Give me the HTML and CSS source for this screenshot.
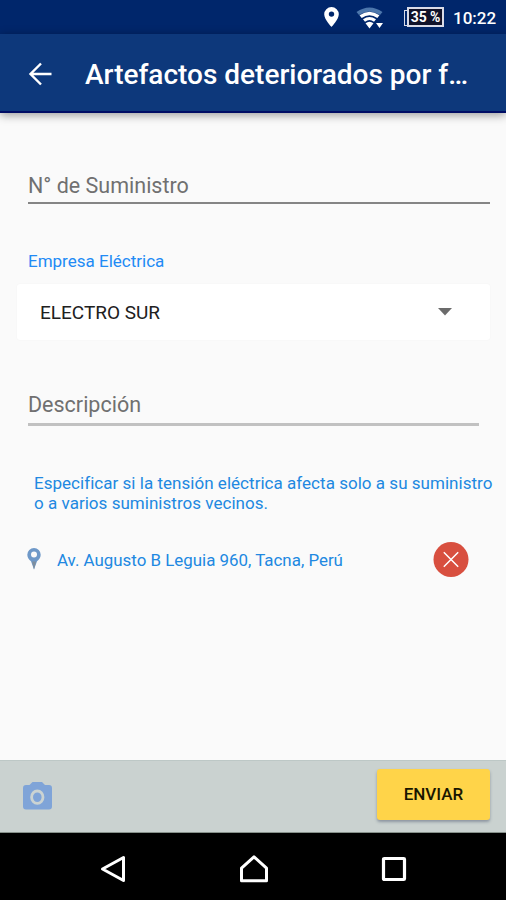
FILE: index.html
```html
<!DOCTYPE html>
<html lang="es">
<head>
<meta charset="utf-8">
<title>Artefactos deteriorados</title>
<link rel="stylesheet" href="styles.css">
</head>
<body>
<div class="screen">
  <div class="status">
    <svg class="status-pin" width="15" height="20" viewBox="0 0 15 20"><path fill="#fff" fill-rule="evenodd" d="M7.500 0A7.300 7.300 0 0 0 .2 7.300C.2 12.600 7.500 20 7.500 20s7.300-7.400 7.300-12.700A7.300 7.300 0 0 0 7.500 0zm0 4.400a2.700 2.700 0 1 1 0 5.400 2.700 2.700 0 0 1 0-5.400z"/></svg>
    <svg class="status-wifi" width="28" height="22" viewBox="0 0 28 22"><path fill="#4d77ac" d="M.5 5Q13.500-4 26.500 5L24 8Q13.500 1 3 8z"/><path fill="#fff" d="M3.500 8.300Q13.500 1.300 23.500 8.300L21.300 11Q13.500 5.500 5.700 11zM7 12.300Q13.500 7.500 20 12.300L18 14.700Q13.500 11.500 9 14.700zM9.500 16.300Q13.500 13.200 17.500 16.300L13.500 21.500zM20 16h7L23.500 21z"/></svg>
    <div class="battery"><span>35 %</span></div>
    <span class="clock">10:22</span>
  </div>
  <header class="appbar">
    <svg class="back" width="24" height="24" viewBox="0 0 24 24"><path fill="none" stroke="#fff" stroke-width="2.400" d="M23.500 12H2.500M13 1.500L2.500 12 13 22.500"/></svg>
    <h1>Artefactos deteriorados por f…</h1>
  </header>
  <main class="form">
    <div class="field supply"><span>N° de Suministro</span></div>
    <div class="label"><span>Empresa Eléctrica</span></div>
    <div class="select"><span>ELECTRO SUR</span><svg width="14" height="8" viewBox="0 0 14 8"><path fill="#6b6b6b" d="M0 0h14L7 7.500z"/></svg></div>
    <div class="field description"><span>Descripción</span></div>
    <p class="hint"><span>Especificar si la tensión eléctrica afecta solo a su suministro</span><br><span>o a varios suministros vecinos.</span></p>
    <div class="address">
      <svg class="address-pin" width="14" height="22" viewBox="0 0 14 22"><path fill="#6e98c8" fill-rule="evenodd" d="M7 0A6.700 6.700 0 0 0 .300 6.700C.300 9.500 2 11.500 4 13.300L7 21.500l3-8.200c2-1.800 3.700-3.800 3.700-6.600A6.700 6.700 0 0 0 7 0zm0 3.500a3 3 0 1 1 0 6 3 3 0 0 1 0-6z"/><path fill="#7f8e9d" d="M5 13.500h4L7 21.500z"/></svg>
      <span class="address-text">Av. Augusto B Leguia 960, Tacna, Perú</span>
      <svg class="remove" width="36" height="36" viewBox="0 0 36 36"><circle cx="18" cy="18.500" r="17.500" fill="#d84f3f"/><path fill="none" stroke="#fff" stroke-width="1.500" d="M10.800 11.300l14.400 14.400M25.200 11.300L10.800 25.700"/></svg>
    </div>
  </main>
  <footer class="actions">
    <svg class="camera" width="29" height="28" viewBox="0 0 29 28"><path fill="#7fa4d8" d="M3 3h3.500l3-3h9.500l3 3h4a3 3 0 0 1 3 3v18.500a3 3 0 0 1-3 3H3a3 3 0 0 1-3-3V6a3 3 0 0 1 3-3z"/><ellipse cx="14.300" cy="15.200" rx="5.700" ry="6.200" fill="none" stroke="#cbd3d2" stroke-width="2.800"/></svg>
    <button class="send"><span>ENVIAR</span></button>
  </footer>
  <nav class="system">
    <svg width="26" height="28" viewBox="0 0 26 28"><path fill="none" stroke="#fff" stroke-width="3" stroke-linejoin="round" d="M2.500 14L23.500 2.500v23z"/></svg>
    <svg width="30" height="28" viewBox="0 0 30 28"><path fill="none" stroke="#fff" stroke-width="3" stroke-linejoin="round" d="M2.500 25.700V13.200L15 1.800l12.500 11.400v12.500z"/></svg>
    <svg width="26" height="26" viewBox="0 0 26 26"><rect x="2.500" y="2.500" width="21" height="21" rx=".8" fill="none" stroke="#fff" stroke-width="3.200"/></svg>
  </nav>
</div>
</body>
</html>
```
FILE: styles.css
```css
* { box-sizing: border-box; }
body { margin: 0; font-family: Roboto, sans-serif; }
svg { display: block; flex: none; }
span, h1 { white-space: nowrap; }
.screen { width: 506px; height: 900px; display: flex; flex-direction: column; overflow: hidden; background: #fafafa; }
.status { height: 34px; flex: none; background: #00266b; color: #fff; display: flex; align-items: flex-start; padding: 7px 11px 0 0; justify-content: flex-end; }
.status-pin { margin-right: 17px; }
.status-wifi { margin-right: 23px; }
.battery { width: 37px; height: 20px; border: 2px solid #d9dbe7; background: #101229; font-size: 14px; line-height: 16px; font-weight: 700; letter-spacing: -.1px; margin-right: 9px; display: flex; justify-content: center; position: relative; }
.battery::before { content: ""; position: absolute; left: -5px; top: 1px; width: 3px; height: 14px; border: 1px solid #d9dbe7; border-right: 0; }
.clock { font-size: 17px; line-height: 22px; font-weight: 500; width: 42px; }
.appbar { height: 79px; flex: none; background: #0d387b; border-bottom: 2px solid #000d64; box-shadow: 0 2px 9px rgba(0,0,0,.4); display: flex; align-items: center; padding: 2px 0 0 28px; color: #fff; }
.back { margin-right: 33px; }
h1 { margin: 3px 0 0; font-size: 28px; line-height: 34px; font-weight: 500; }
.form { flex: 1; display: flex; flex-direction: column; padding: 52px 16px 0 17px; }
.field { color: #707070; font-size: 21.5px; line-height: 30px; margin-left: 11px; }
.supply { height: 39px; padding-top: 6px; border-bottom: 2px solid #858585; }
.label { color: #218af5; font-size: 17px; line-height: 22px; margin: 46px 0 0 11px; }
.select { margin-top: 12px; height: 56px; border-radius: 3px; background: #fff; display: flex; align-items: center; justify-content: space-between; padding: 0 38px 0 23px; font-size: 19px; color: #202020; box-shadow: 0 0 2px rgba(0,0,0,.04); }
.description { height: 37px; padding-top: 1px; margin: 49px 11px 0 11px; border-bottom: 3px solid #c1c1c1; }
.hint { margin: 47px 0 0 17px; font-size: 17px; letter-spacing: .03px; line-height: 20px; color: #2188e1; }
.address { margin-top: 28px; height: 36px; display: flex; align-items: center; padding: 0 21px 0 10px; font-size: 16.9px; color: #2188e1; }
.address-pin { margin-right: 16px; }
.address-text { padding-top: 2px; }
.remove { margin-left: auto; }
.actions { height: 73px; flex: none; background: #cad2d0; border-top: 1px solid #bdc8c6; border-bottom: 1px solid #87918b; display: flex; align-items: center; justify-content: space-between; padding: 0 16px 0 23px; }
.camera { margin-bottom: 2px; }
.send { width: 113px; height: 51px; border: 0; border-radius: 3px; background: #ffd449; box-shadow: 0 2px 3px rgba(50,60,90,.4); margin-bottom: 5px; font: 500 17px Roboto, sans-serif; color: #191600; padding: 0; }
.system { height: 67px; flex: none; background: #000; display: flex; align-items: center; padding: 4px 99px 0 100px; justify-content: space-between; }
```
